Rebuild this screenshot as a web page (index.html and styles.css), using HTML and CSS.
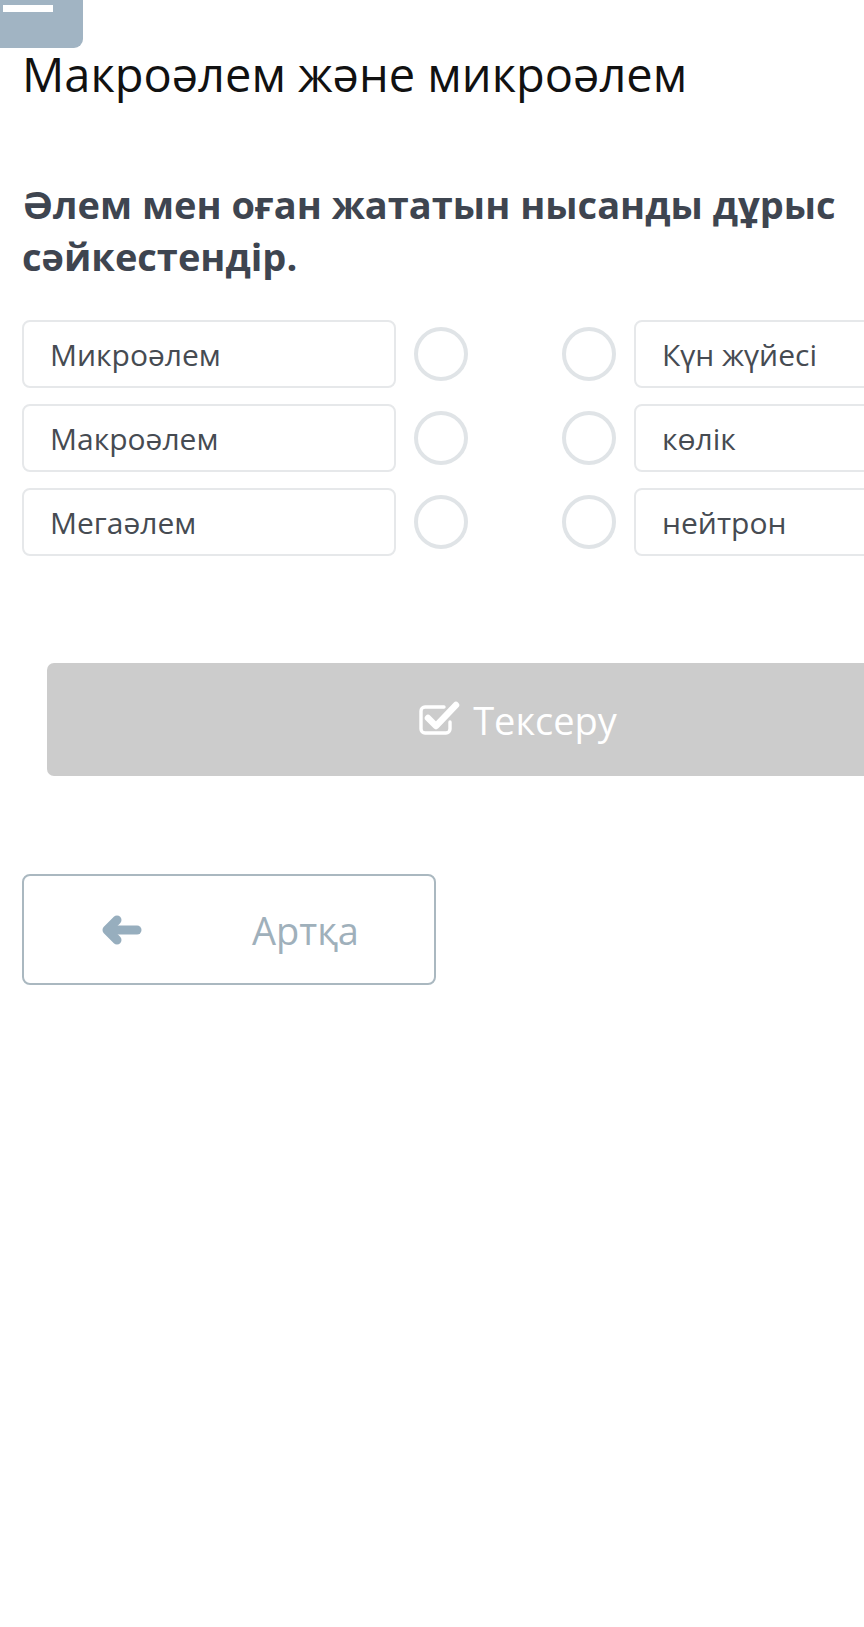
FILE: index.html
```html
<!DOCTYPE html>
<html lang="kk">
<head>
<meta charset="utf-8">
<link rel="stylesheet" href="styles.css">
</head>
<body>
<div class="tab"><span class="tab-bar"></span></div>
<main class="page">
  <h1 class="title">Макроәлем және микроәлем</h1>
  <h2 class="question">Әлем мен оған жататын нысанды дұрыс сәйкестендір.</h2>
  <div class="match">
    <div class="row">
      <div class="item">Микроәлем</div>
      <span class="dot"></span>
      <span class="dot"></span>
      <div class="item">Күн жүйесі</div>
    </div>
    <div class="row">
      <div class="item">Макроәлем</div>
      <span class="dot"></span>
      <span class="dot"></span>
      <div class="item">көлік</div>
    </div>
    <div class="row">
      <div class="item">Мегаәлем</div>
      <span class="dot"></span>
      <span class="dot"></span>
      <div class="item">нейтрон</div>
    </div>
  </div>
  <div class="check-wrap">
    <button class="check">
      <svg class="check-icon" viewBox="0 0 42 36" width="42" height="36" aria-hidden="true">
        <path d="M31 22v7a4 4 0 0 1-4 4H6a4 4 0 0 1-4-4V11a4 4 0 0 1 4-4h19" fill="none" stroke="#fff" stroke-width="3.4" stroke-linecap="round"/>
        <path d="M9 18l8 8L37 5" fill="none" stroke="#fff" stroke-width="6.5" stroke-linecap="round" stroke-linejoin="round"/>
      </svg>
      <span>Тексеру</span>
    </button>
  </div>
  <button class="back">
    <svg class="back-icon" viewBox="0 0 40 30" width="40" height="30" aria-hidden="true">
      <path d="M15 5L5 15l10 10" fill="none" stroke="#97aebe" stroke-width="9" stroke-linecap="round" stroke-linejoin="round"/>
      <path d="M7 15h28" fill="none" stroke="#97aebe" stroke-width="9" stroke-linecap="round"/>
    </svg>
    <span>Артқа</span>
  </button>
</main>
</body>
</html>
```

FILE: styles.css
```css
html, body {
  margin: 0;
  padding: 0;
  background: #fff;
  overflow: hidden;
}
body {
  font-family: "Open Sans", "Noto Sans", sans-serif;
  width: 864px;
  height: 1627px;
  position: relative;
}
.tab {
  position: absolute;
  left: 0;
  top: 0;
  width: 83px;
  height: 48px;
  background: #a1b4c3;
  border-bottom-right-radius: 9px;
}
.tab-bar {
  position: absolute;
  left: 3px;
  top: 5px;
  width: 50px;
  height: 7px;
  background: #fff;
}
.page {
  width: 986px;
  padding: 0 0 0 22px;
}
.title {
  margin: 0;
  padding-top: 43px;
  font-size: 47px;
  font-weight: 400;
  line-height: 62px;
  color: #111;
}
.question {
  margin: 73px 0 0;
  font-size: 38px;
  font-weight: 700;
  line-height: 52px;
  color: #3e4550;
  width: 840px;
}
.match {
  margin-top: 38px;
  display: flex;
  flex-direction: column;
  gap: 16px;
}
.row {
  display: flex;
  align-items: center;
}
.item {
  box-sizing: border-box;
  width: 374px;
  height: 68px;
  border: 2px solid #e6e8ea;
  border-radius: 8px;
  padding-left: 26px;
  display: flex;
  align-items: center;
  font-size: 30px;
  color: #464b52;
}
.dot {
  box-sizing: border-box;
  width: 54px;
  height: 54px;
  border: 4px solid #e0e4e7;
  border-radius: 50%;
  margin-left: 18px;
}
.dot + .dot {
  margin-left: 94px;
}
.row .item:last-child {
  margin-left: 18px;
}
.check-wrap {
  padding: 107px 25px 0;
}
.check {
  width: 936px;
  height: 113px;
  border: 0;
  border-radius: 7px;
  background: #cccccc;
  color: #fff;
  font-family: inherit;
  font-size: 38px;
  display: flex;
  align-items: center;
  justify-content: center;
  gap: 12px;
}
.check-icon {
  margin-top: -4px;
  margin-left: 6px;
}
.back {
  margin-top: 98px;
  box-sizing: border-box;
  width: 414px;
  height: 111px;
  border: 2px solid #aab8c0;
  border-radius: 8px;
  background: #fff;
  font-family: inherit;
  font-size: 38px;
  color: #9fb0bb;
  display: flex;
  align-items: center;
  padding: 0 0 0 78px;
}
.back-icon {
  margin-right: 110px;
}
```
